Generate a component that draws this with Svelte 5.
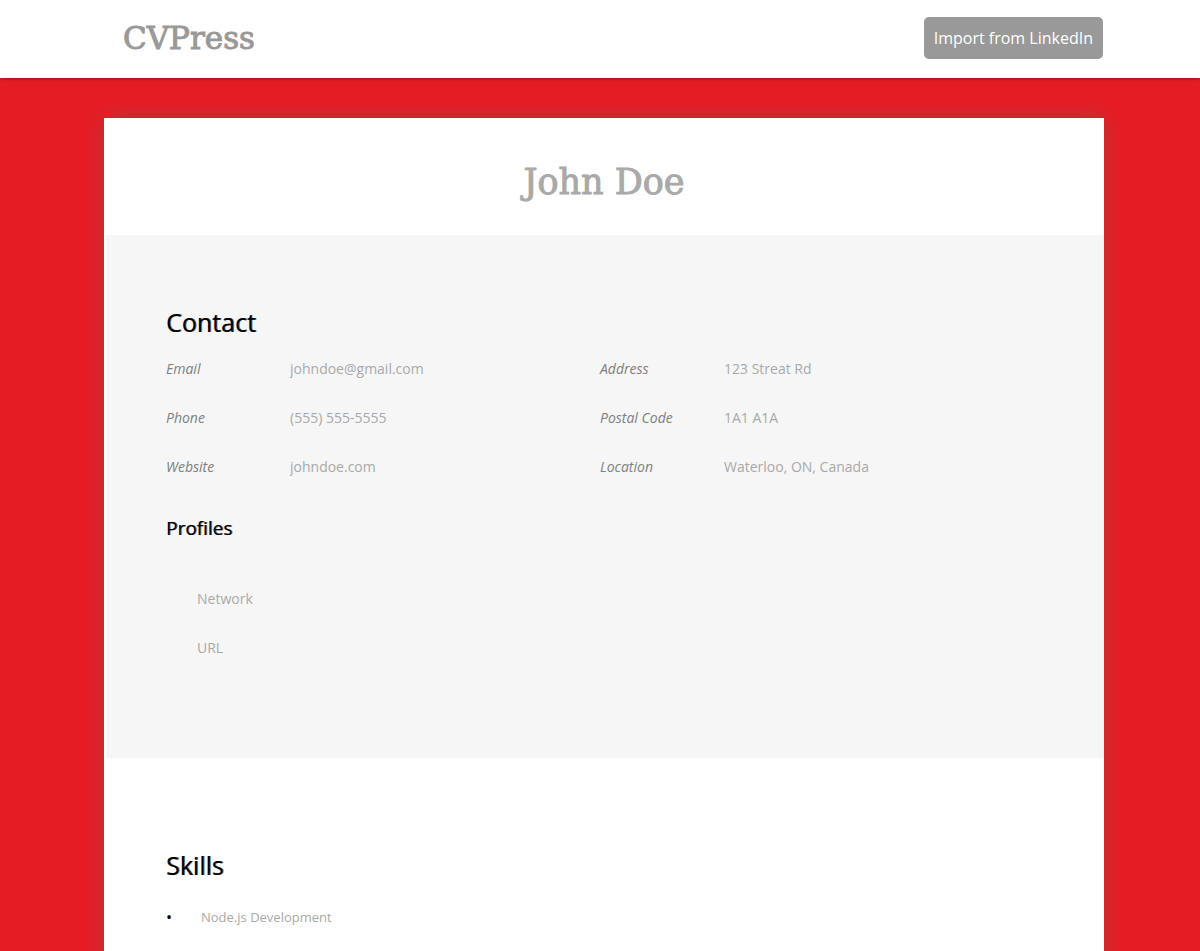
<script>
  const contact = [
    { id: 'email', label: 'Email', hint: 'johndoe@gmail.com' },
    { id: 'address', label: 'Address', hint: '123 Streat Rd' },
    { id: 'phone', label: 'Phone', hint: '(555) 555-5555' },
    { id: 'postal', label: 'Postal Code', hint: '1A1 A1A' },
    { id: 'website', label: 'Website', hint: 'johndoe.com' },
    { id: 'location', label: 'Location', hint: 'Waterloo, ON, Canada' }
  ];
  const profile = ['Network', 'URL'];
  const skills = ['Node.js Development'];
</script>

<header>
  <div class="bar">
    <a class="logo" href="#top">CVPress</a>
    <button type="button">Import from LinkedIn</button>
  </div>
</header>

<main>
  <form class="sheet">
    <div class="name">
      <input type="text" placeholder="John Doe" aria-label="John Doe" />
    </div>

    <section class="contact">
      <h2>Contact</h2>
      <div class="fields">
        {#each contact as f}
          <div class="field">
            <label for={f.id}>{f.label}</label>
            <input type="text" id={f.id} placeholder={f.hint} />
          </div>
        {/each}
      </div>
      <h3>Profiles</h3>
      <div class="profiles">
        {#each profile as p}
          <input type="text" placeholder={p} aria-label={p} />
        {/each}
      </div>
    </section>

    <section class="skills">
      <h2>Skills</h2>
      <ul>
        {#each skills as s}
          <li><input type="text" placeholder={s} aria-label={s} /></li>
        {/each}
      </ul>
    </section>
  </form>
</main>

<style>
  :global(body) {
    margin: 0;
    background: #e61c24;
    font-family: 'Open Sans', sans-serif;
  }

  header {
    position: relative;
    background: #fff;
    padding-left: 8px;
    box-shadow: 0 1px 3px rgba(0, 0, 0, 0.35);
  }

  .bar {
    display: flex;
    align-items: center;
    justify-content: space-between;
    box-sizing: border-box;
    max-width: 1000px;
    min-height: 78px;
    margin: 0 auto;
    padding: 0 1px 2px 19px;
  }

  .logo {
    color: #999;
    font: 31px/40px 'DejaVu Serif', serif;
    text-decoration: none;
    -webkit-text-stroke: 1px #999;
  }

  button {
    border: 0;
    border-radius: 5px;
    padding: 10px;
    background: #999;
    color: #fff;
    font: 16px/22px 'Open Sans', sans-serif;
    cursor: pointer;
  }

  main {
    padding: 40px 0 0 8px;
  }

  .sheet {
    max-width: 1000px;
    margin: 0 auto;
    background: #fff;
    box-shadow: 0 0 20px rgba(102, 102, 102, 0.4);
  }

  input {
    display: block;
    box-sizing: border-box;
    min-width: 0;
    width: 100%;
    border: 0;
    padding: 0;
    background: transparent;
    color: #333;
    font: 14px/20px 'Open Sans', sans-serif;
    outline-color: #999;
  }

  input::placeholder {
    color: #a9a9a9;
    opacity: 1;
  }

  .name {
    padding: 40px 60px 29px;
  }

  .name input {
    height: 48px;
    text-align: center;
    font: 35px/48px 'DejaVu Serif', serif;
    -webkit-text-stroke: 1px #a9a9a9;
  }

  section {
    border-left: 2px solid #fff;
    padding: 69px 70px 100px 60px;
  }

  h2,
  h3 {
    margin: 0;
    color: #000;
    font-weight: 400;
    text-shadow: 1px 0 rgba(0, 0, 0, 0.6);
  }

  h2 {
    font-size: 25px;
    line-height: 36px;
  }

  h3 {
    margin-top: 24px;
    font-size: 19px;
    line-height: 26px;
  }

  .contact {
    background: #f6f6f6;
  }

  .fields {
    display: grid;
    grid-template-columns: 1fr 1fr;
    margin-top: 4px;
  }

  .field {
    display: grid;
    grid-template-columns: 124px 1fr;
    align-items: center;
    height: 49px;
  }

  label {
    color: #808080;
    font-size: 14px;
    font-style: italic;
  }

  .profiles {
    display: grid;
    gap: 29px;
    margin: 48px 0 0 31px;
  }

  .skills {
    padding-top: 89px;
  }

  ul {
    margin: 24px 0 0;
    padding: 0;
    list-style: none;
  }

  li {
    display: grid;
    grid-template-columns: 35px 1fr;
    align-items: center;
    font-size: 16px;
    line-height: 20px;
  }

  li::before {
    content: '•';
    color: #000;
  }

  li input {
    font-size: 13px;
  }
</style>
